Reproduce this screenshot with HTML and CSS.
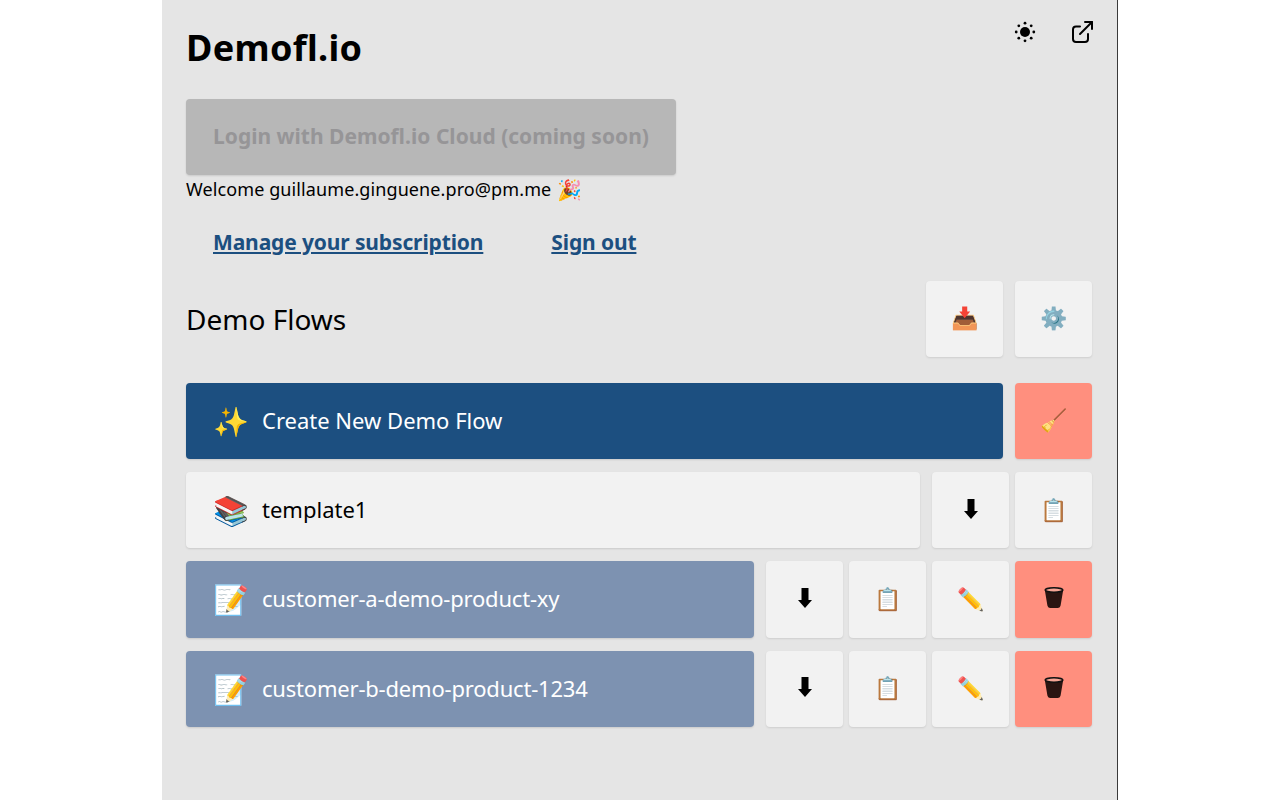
FILE: index.html
```html
<!DOCTYPE html>
<html lang="en">
<head>
<meta charset="utf-8">
<title>Demofl.io</title>
<link rel="stylesheet" href="styles.css">
</head>
<body>
<main class="panel">
  <header class="top">
    <h1 class="title">Demofl.io</h1>
    <div class="top-icons">
      <button class="icon-btn" aria-label="Theme">
        <svg width="22" height="22" viewBox="0 0 22 22" fill="#000"><circle cx="11" cy="11" r="5"/><circle cx="11" cy="2.2" r="1.4"/><circle cx="11" cy="19.8" r="1.4"/><circle cx="2.2" cy="11" r="1.4"/><circle cx="19.8" cy="11" r="1.4"/><circle cx="4.8" cy="4.8" r="1.4"/><circle cx="17.2" cy="4.8" r="1.4"/><circle cx="4.8" cy="17.2" r="1.4"/><circle cx="17.2" cy="17.2" r="1.4"/></svg>
      </button>
      <button class="icon-btn" aria-label="Open">
        <svg class="open-icon" width="24" height="24" viewBox="0 0 24 24" fill="none" stroke="#000" stroke-width="2" stroke-linecap="round" stroke-linejoin="round"><path d="M11 5.5H7a3 3 0 0 0-3 3V18a3 3 0 0 0 3 3h9a3 3 0 0 0 3-3v-5"/><path d="M11 13 23 1"/><path d="M16 1h7v7"/></svg>
      </button>
    </div>
  </header>

  <button class="btn login" disabled>Login with Demofl.io Cloud (coming soon)</button>
  <p class="welcome">Welcome guillaume.ginguene.pro@pm.me <span class="party">🎉</span></p>
  <nav class="links">
    <a href="#">Manage your subscription</a>
    <a href="#">Sign out</a>
  </nav>

  <section class="flows-head">
    <h2 class="flows-title">Demo Flows</h2>
    <div class="actions">
      <button class="tile">📥</button>
      <button class="tile">⚙️</button>
    </div>
  </section>

  <div class="rows">
    <div class="row">
      <button class="btn main primary"><span class="emoji">✨</span>Create New Demo Flow</button>
      <button class="tile danger">🧹</button>
    </div>
    <div class="row">
      <button class="btn main light"><span class="emoji">📚</span>template1</button>
      <button class="tile" aria-label="Download">
        <svg class="arrow" width="14" height="20" viewBox="0 0 14 20"><path d="M3.5 0h7v12H14l-7 8-7-8h3.5z"/></svg>
      </button>
      <button class="tile">📋</button>
    </div>
    <div class="row">
      <button class="btn main muted"><span class="emoji">📝</span>customer-a-demo-product-xy</button>
      <button class="tile" aria-label="Download">
        <svg class="arrow" width="14" height="20" viewBox="0 0 14 20"><path d="M3.5 0h7v12H14l-7 8-7-8h3.5z"/></svg>
      </button>
      <button class="tile">📋</button>
      <button class="tile">✏️</button>
      <button class="tile danger" aria-label="Delete">
        <svg class="bin" width="20" height="21" viewBox="0 0 20 21"><path class="bin-body" d="M.8 3 3.4 18.6Q3.7 21 6 21h8q2.3 0 2.6-2.4L19.2 3z"/><ellipse class="bin-rim" cx="10" cy="3" rx="8.8" ry="2.2"/></svg>
      </button>
    </div>
    <div class="row">
      <button class="btn main muted"><span class="emoji">📝</span>customer-b-demo-product-1234</button>
      <button class="tile" aria-label="Download">
        <svg class="arrow" width="14" height="20" viewBox="0 0 14 20"><path d="M3.5 0h7v12H14l-7 8-7-8h3.5z"/></svg>
      </button>
      <button class="tile">📋</button>
      <button class="tile">✏️</button>
      <button class="tile danger" aria-label="Delete">
        <svg class="bin" width="20" height="21" viewBox="0 0 20 21"><path class="bin-body" d="M.8 3 3.4 18.6Q3.7 21 6 21h8q2.3 0 2.6-2.4L19.2 3z"/><ellipse class="bin-rim" cx="10" cy="3" rx="8.8" ry="2.2"/></svg>
      </button>
    </div>
  </div>
</main>
</body>
</html>
```
FILE: styles.css
```css
* { box-sizing: border-box; }
html, body { margin: 0; height: 100%; }
body {
  background: #fff;
  font-family: "Noto Sans", "Open Sans", sans-serif;
  color: #000;
}
button { font-family: inherit; }
.panel {
  width: 956px;
  height: 800px;
  margin-left: 162px;
  padding: 0 25px 0 24px;
  background: #e5e5e5;
  border-right: 1px solid #3a3a3a;
  overflow: hidden;
}
.top { display: flex; justify-content: space-between; align-items: flex-start; height: 99px; }
.title { margin: 26px 0 0; font-size: 36px; line-height: 44px; font-weight: 700; letter-spacing: .33px; }
.top-icons { display: flex; gap: 32px; padding-top: 20px; margin-right: -1px; }
.icon-btn { display: flex; align-items: center; justify-content: center; width: 24px; height: 24px; padding: 0; border: 0; background: none; }
.icon-btn:last-child { margin-top: 1px; }
.open-icon { overflow: visible; }
.btn {
  display: flex; align-items: center;
  height: 76.5px; padding: 0 27px 2px; border: 0; border-radius: 4px;
  font-size: 22px; box-shadow: 0 1px 2px rgba(0,0,0,.12);
}
.login {
  width: 490px; height: 76px; justify-content: center; padding: 0 0 2px;
  background: #b7b7b7; color: #969597; font-weight: 700; font-size: 21px;
}
.welcome { margin: 0; height: 28.5px; padding-top: 1px; font-size: 18px; line-height: 26px; letter-spacing: .1px; }
.party { font-size: 20px; margin-left: 1px; position: relative; top: 1px; }
.links { display: flex; gap: 68px; padding: 24px 0 0 27px; height: 78px; }
.links a { color: #1c4f80; font-size: 21px; line-height: 28px; font-weight: 700; letter-spacing: -.13px; }
.flows-head { display: flex; justify-content: space-between; align-items: center; height: 76.5px; margin-top: -1px; }
.flows-title { margin: 0; font-size: 28px; font-weight: 400; }
.actions { display: flex; gap: 12px; }
.tile {
  flex: none; width: 77px; height: 76.5px; padding: 0 0 3px; border: 0; border-radius: 4px;
  background: #f2f2f2; font-size: 22px; box-shadow: 0 1px 2px rgba(0,0,0,.1);
  display: flex; align-items: center; justify-content: center; color: #000;
}
.danger { background: #ff8f7e; }
.rows { display: flex; flex-direction: column; gap: 12.85px; margin-top: 25.5px; }
.row { display: flex; gap: 6px; }
.main { flex: 1; text-align: left; margin-right: 6.5px; }
.primary { background: #1c4f80; color: #fff; }
.light { background: #f2f2f2; color: #000; }
.muted { background: #7d92b1; color: #fff; letter-spacing: -.2px; }
.emoji { font-size: 28.8px; width: 49px; letter-spacing: 0; margin-top: 1px; }
.arrow { fill: #000; }
.bin-body { fill: #2a1512; }
.bin-rim { fill: #f6a595; stroke: #111; stroke-width: 1.6; }
```
